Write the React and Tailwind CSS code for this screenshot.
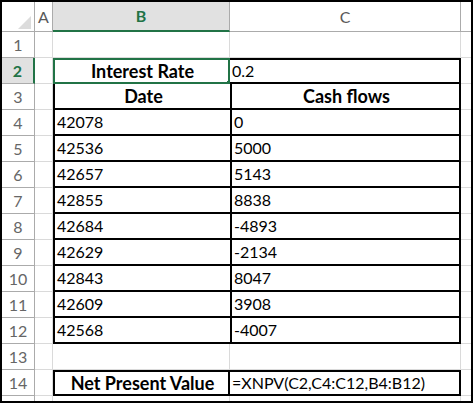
const rows = [
  { n: 1, b: '', c: '' },
  { n: 2, b: 'Interest Rate', c: '0.2' },
  { n: 3, b: 'Date', c: 'Cash flows' },
  { n: 4, b: '42078', c: '0' },
  { n: 5, b: '42536', c: '5000' },
  { n: 6, b: '42657', c: '5143' },
  { n: 7, b: '42855', c: '8838' },
  { n: 8, b: '42684', c: '-4893' },
  { n: 9, b: '42629', c: '-2134' },
  { n: 10, b: '42843', c: '8047' },
  { n: 11, b: '42609', c: '3908' },
  { n: 12, b: '42568', c: '-4007' },
  { n: 13, b: '', c: '' },
  { n: 14, b: 'Net Present Value', c: '=XNPV(C2,C4:C12,B4:B12)' },
]

const grid = 'border-r border-b border-[#dadada]'

// border classes for the bordered block, spelled out per row
function bStyle(n) {
  if (n === 2) return 'border-2 border-[#217346] relative font-bold text-[18px] justify-center'
  if (n === 3) return 'border-l-2 border-b-2 border-black font-bold text-[18px] justify-center'
  if (n >= 4 && n <= 12) return 'border-l-2 border-b-2 border-black'
  if (n === 14) return 'border-2 border-black font-bold text-[18px] justify-center'
  return grid
}

function cStyle(n) {
  if (n === 2) return 'border-t-2 border-r-2 border-b-2 border-black'
  if (n === 3) return 'border-l-2 border-r-2 border-b-2 border-black font-bold text-[18px] justify-center'
  if (n >= 4 && n <= 12) return 'border-l-2 border-r-2 border-b-2 border-black'
  if (n === 14) return 'border-t-2 border-r-2 border-b-2 border-black'
  return grid
}

export default function App() {
  return (
    <div
      className="h-[403px] w-[473px] overflow-hidden border-2 border-black bg-white text-[16px] text-black"
      style={{ fontFamily: 'Lato, "Open Sans", sans-serif' }}
    >
      <div className="grid grid-cols-[33px_18px_177px_231px_10px] grid-rows-[30px_repeat(14,26px)_5px]">
        {/* header row */}
        <div className="relative border-r border-b border-[#ababab]">
          <svg className="absolute bottom-[2px] right-[3px]" width="13" height="13" viewBox="0 0 13 13">
            <polygon points="13,0 13,13 0,13" fill="#dcdcdc" />
          </svg>
        </div>
        <div className="flex items-center justify-center border-r border-b border-[#ababab] text-[#595959]">A</div>
        <div className="flex items-center justify-center border-r border-b-2 border-r-[#ababab] border-b-[#217346] bg-[#e1e1e1] font-bold text-[#217346]">
          B
        </div>
        <div className="flex items-center justify-center border-r border-b border-[#ababab] text-[#595959]">C</div>
        <div className="border-b border-[#ababab]" />

        {rows.map((r) => (
          <Row key={r.n} r={r} />
        ))}

        {/* partial row at the bottom */}
        <div className="border-r border-[#ababab]" />
        <div className="border-r border-[#dadada]" />
        <div className="border-r border-[#dadada]" />
        <div className="border-r border-[#dadada]" />
        <div />
      </div>
    </div>
  )
}

function Row({ r }) {
  const selected = r.n === 2
  return (
    <>
      <div
        className={
          selected
            ? 'flex items-center justify-center border-r-2 border-b border-r-[#217346] border-b-[#ababab] bg-[#e1e1e1] font-bold text-[#217346]'
            : 'flex items-center justify-center border-r border-b border-[#ababab] text-[#666666]'
        }
      >
        {r.n}
      </div>
      <div className={grid} />
      <div className={`flex items-center overflow-hidden whitespace-nowrap pl-[2px] ${bStyle(r.n)}`}>
        {r.b}
        {selected && (
          <span className="absolute -bottom-[5px] -right-[5px] h-[7px] w-[7px] border border-white bg-[#217346]" />
        )}
      </div>
      <div className={`flex items-center overflow-hidden whitespace-nowrap pl-[2px] ${cStyle(r.n)}`}>{r.c}</div>
      <div className="border-b border-[#dadada]" />
    </>
  )
}
